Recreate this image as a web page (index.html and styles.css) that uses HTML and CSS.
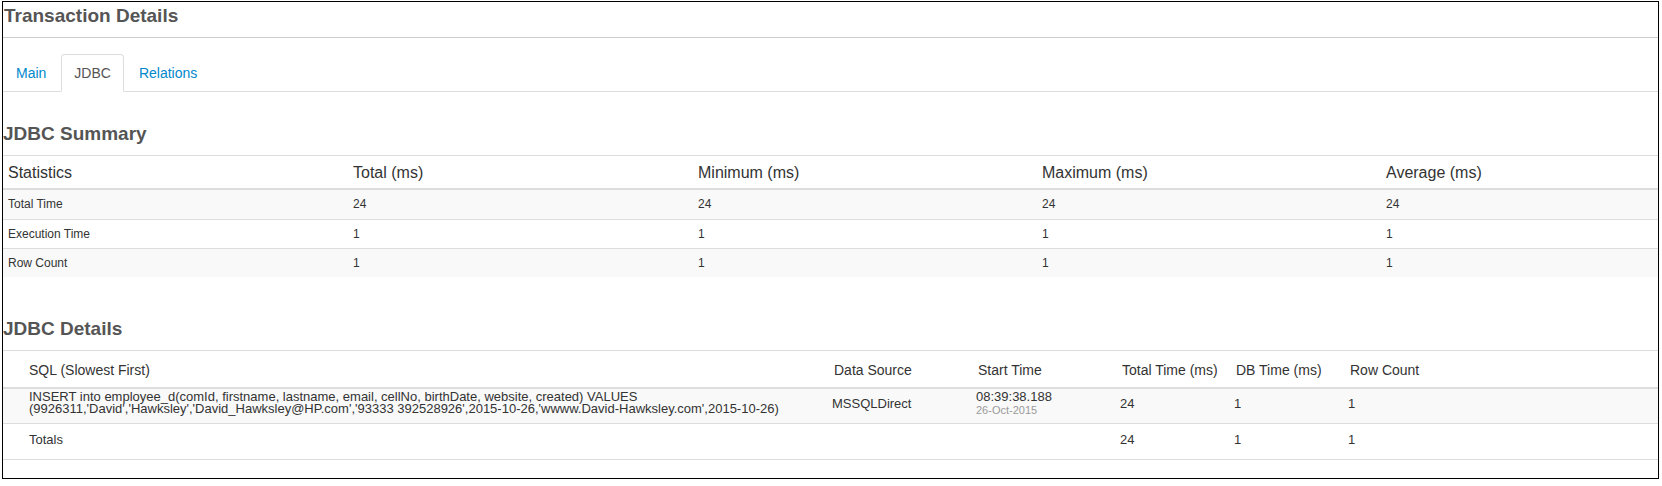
FILE: index.html
```html
<!DOCTYPE html>
<html>
<head>
<meta charset="utf-8">
<title>Transaction Details</title>
<link rel="stylesheet" href="styles.css">
</head>
<body>
<div class="panel">
  <div class="page-header"><h1 class="title">Transaction Details</h1></div>
  <ul class="tabs">
    <li class="tab"><a class="tab-link">Main</a></li>
    <li class="tab active"><a class="tab-link">JDBC</a></li>
    <li class="tab"><a class="tab-link">Relations</a></li>
  </ul>

  <section class="section">
    <h2 class="section-title">JDBC Summary</h2>
    <table class="stats">
      <colgroup>
        <col class="c-stat"><col class="c-stat"><col class="c-stat2"><col class="c-stat2"><col>
      </colgroup>
      <thead>
        <tr><th>Statistics</th><th>Total (ms)</th><th>Minimum (ms)</th><th>Maximum (ms)</th><th>Average (ms)</th></tr>
      </thead>
      <tbody>
        <tr><td>Total Time</td><td>24</td><td>24</td><td>24</td><td>24</td></tr>
        <tr><td>Execution Time</td><td>1</td><td>1</td><td>1</td><td>1</td></tr>
        <tr><td>Row Count</td><td>1</td><td>1</td><td>1</td><td>1</td></tr>
      </tbody>
    </table>
  </section>

  <section class="section">
    <h2 class="section-title">JDBC Details</h2>
    <table class="details">
      <colgroup>
        <col class="d-sql"><col class="d-src"><col class="d-start"><col class="d-total"><col class="d-db"><col>
      </colgroup>
      <thead>
        <tr><th>SQL (Slowest First)</th><th>Data Source</th><th>Start Time</th><th>Total Time (ms)</th><th>DB Time (ms)</th><th>Row Count</th></tr>
      </thead>
      <tbody>
        <tr class="row-main">
          <td class="sql">INSERT into employee_d(comId, firstname, lastname, email, cellNo, birthDate, website, created) VALUES (9926311,'David','Hawksley','David_Hawksley@HP.com','93333 392528926',2015-10-26,'wwww.David-Hawksley.com',2015-10-26)</td>
          <td>MSSQLDirect</td>
          <td class="start"><span class="time">08:39:38.188</span><span class="date">26-Oct-2015</span></td>
          <td>24</td>
          <td>1</td>
          <td>1</td>
        </tr>
        <tr class="row-totals">
          <td>Totals</td><td></td><td></td><td>24</td><td>1</td><td>1</td>
        </tr>
      </tbody>
    </table>
  </section>
</div>
</body>
</html>
```

FILE: styles.css
```css
html, body {
  margin: 0;
  padding: 0;
  background: #fff;
}

body {
  font-family: "Liberation Sans", Arial, sans-serif;
  color: #333;
}

.panel {
  margin: 1px 0 0 2px;
  width: 1655px;
  height: 476px;
  border: 1px solid #000;
}

.page-header {
  padding: 4px 1px 11px;
  border-bottom: 1px solid #ccc;
}

.title {
  margin: 0;
  font-size: 19px;
  line-height: 20px;
  font-weight: bold;
  color: #555;
}

.tabs {
  list-style: none;
  margin: 16px 0 0;
  padding: 0;
  display: flex;
  border-bottom: 1px solid #ddd;
}

.tab {
  margin: 0 2px -1px 0;
}

.tab-link {
  display: block;
  padding: 8px 12px;
  font-size: 14px;
  line-height: 20px;
  color: #0088cc;
  border: 1px solid transparent;
  border-radius: 4px 4px 0 0;
  cursor: pointer;
}

.tab.active .tab-link {
  color: #555;
  background: #fff;
  border-color: #ddd #ddd transparent;
}

.section {
  display: flow-root;
}

.section-title {
  margin: 32px 0 11px;
  font-size: 19px;
  line-height: 20px;
  font-weight: bold;
  color: #555;
}

table {
  width: 100%;
  border-collapse: separate;
  border-spacing: 0;
  table-layout: fixed;
}

/* Summary table */
.stats {
  margin: 0 0 10px;
}

.c-stat { width: 345px; }
.c-stat2 { width: 344px; }

.stats th {
  font-size: 16px;
  font-weight: normal;
  line-height: 20px;
  text-align: left;
  padding: 7px 5px 5px;
  border-top: 1px solid #ddd;
  border-bottom: 2px solid #ddd;
}

.stats td {
  font-size: 12px;
  line-height: 17px;
  padding: 6px 5px 5px;
  border-top: 1px solid #ddd;
}

.stats tbody tr:first-child td {
  border-top: 0;
  padding-bottom: 6px;
}

.stats tbody tr:nth-child(odd) td {
  background: #f9f9f9;
}

/* Details table */
.details {
  margin: 0;
}

.d-sql { width: 821px; }
.d-src { width: 144px; }
.d-start { width: 144px; }
.d-total { width: 114px; }
.d-db { width: 114px; }

.details th {
  font-size: 14px;
  font-weight: normal;
  line-height: 20px;
  text-align: left;
  padding: 9px 8px 7px 10px;
  border-top: 1px solid #ddd;
  border-bottom: 2px solid #ddd;
}

.details th:first-child,
.details td:first-child {
  padding-left: 26px;
}

.details td {
  font-size: 13px;
  line-height: 17px;
  vertical-align: middle;
  padding: 1px 8px 7px;
}

.details .row-main td {
  background: #f9f9f9;
}

.details td.sql {
  line-height: 12px;
}

.details td.start {
  padding-bottom: 5px;
}

.time {
  display: block;
  font-size: 13px;
  line-height: 13px;
}

.date {
  display: block;
  font-size: 11px;
  line-height: 15px;
  color: #999;
}

.details .row-totals td {
  padding-top: 7px;
  padding-bottom: 11px;
  border-top: 1px solid #ddd;
  border-bottom: 1px solid #ddd;
}
```
